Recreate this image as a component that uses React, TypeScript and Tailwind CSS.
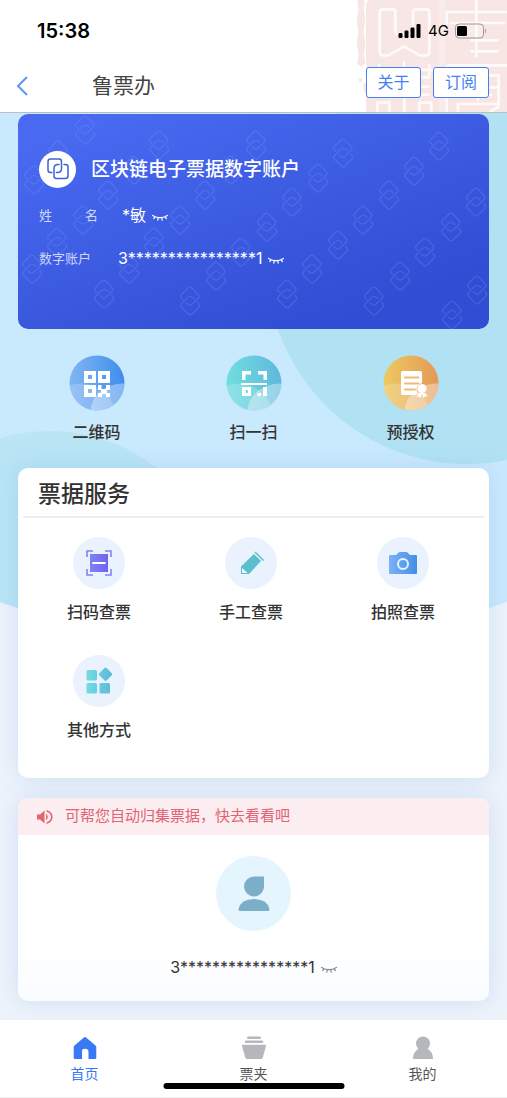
import React from 'react';

const MOTIFS: [number, number][] = [
  [85, 130], [58, 155], [34, 180],
  [159, 145], [134, 170], [108, 195], [83, 220], [57, 242], [32, 269],
  [256, 145], [231, 170], [205, 195], [180, 220], [154, 242], [129, 269], [104, 294],
  [343, 153], [318, 178], [292, 202], [267, 227], [241, 252], [216, 276], [190, 301],
  [439, 146], [414, 171], [389, 195], [363, 220], [338, 245], [312, 269], [287, 294],
  [476, 202], [451, 227], [425, 252], [400, 276], [374, 301],
  [477, 290], [452, 315],
];

const LINK_BACK = 'M5 14.500H3.500Q1 14.500 1 12V3.500Q1 1 3.500 1H12Q14.500 1 14.500 3.500V10.500Q14.500 14.500 10.500 14.500H9.500';
const LINK_FRONT = 'M17 6.500H18.500Q21 6.500 21 9V18Q21 20.500 18.500 20.500H9.500Q7 20.500 7 18V10.500Q7 6.500 11 6.500H12';

function CardPattern() {
  return (
    <svg className="absolute inset-0 h-full w-full" viewBox="18 114 471 215" preserveAspectRatio="xMidYMid slice" aria-hidden="true">
      <defs>
        <g id="link-motif" fill="none" stroke="#8ba0fb" strokeOpacity="0.23" strokeWidth="1.3" strokeLinecap="round" strokeLinejoin="round">
          <g transform="rotate(45) scale(1.06) translate(-11 -10.75)">
            <path d={LINK_BACK} />
            <path d={LINK_FRONT} />
          </g>
        </g>
      </defs>
      {MOTIFS.map(([x, y]) => (
        <use key={`${x}-${y}`} href="#link-motif" x={x} y={y} />
      ))}
    </svg>
  );
}

function Seal() {
  return (
    <svg className="absolute top-0 right-0 h-28 w-[157px]" viewBox="0 0 471 336" aria-hidden="true">
      <path d="M54 0H471V336H48V205Q52 196 48 185V12Z" fill="#f7e6e4" />
      <path d="M22 0H44L42 30L46 60L41 90L46 130L42 165L46 190L34 200L22 192L26 160L20 130L25 95L20 60L25 30Z" fill="#f7e6e4" />
      <path d="M24 236l10 -2 4 8 -8 6zM40 250h8v30l-6 -4z" fill="#f7e6e4" />
      <g fill="none" stroke="#fff" strokeOpacity="0.8" strokeWidth="8" strokeLinejoin="round" strokeLinecap="round">
        <path d="M136 92V36Q136 28 128 28H98Q89 28 89 36V156Q89 166 98 166H116L163 139L208 166H229Q238 166 238 156V36Q238 28 229 28H198Q189 28 189 36V92Q189 102 180 102H145Q136 102 136 92" />
        <path d="M60 210H262M88 196V232H238V196M163 186V336M92 260H236M92 284H236M82 336V308H118V336M208 336V308H244V336" />
        <path d="M379 0V170M290 70V36H468M302 69H462M364 121H442M364 154H442" />
        <path d="M290 336V208Q290 196 302 196H471M324 226H446V312H324V336M324 262H446M384 226V300M350 284H424M420 336L446 320" />
      </g>
      <path d="M266 0H286V336H266Z" fill="#fff" fillOpacity="0.2" />
    </svg>
  );
}

function ClosedEye({ className }: { className: string }) {
  return (
    <svg className={`h-2 w-4 ${className}`} viewBox="0 0 16 8" fill="none" stroke="currentColor" strokeWidth="1.2" strokeLinecap="round" aria-hidden="true">
      <path d="M0.6 1.4Q8 6 15.4 1.4M2.8 2.8L1.8 4.6M6.2 3.8L5.8 6.2M9.8 3.8L10.2 6.2M13.2 2.8L14.4 4.6" />
    </svg>
  );
}

function Disc({ id, from, to, children }: { id: string; from: string; to: string; children: React.ReactNode }) {
  return (
    <svg className="size-14" viewBox="0 0 56 56" aria-hidden="true">
      <defs>
        <linearGradient id={`${id}-fill`} x1="0" x2="1" y1="0" y2="0">
          <stop offset="0" stopColor={from} />
          <stop offset="1" stopColor={to} />
        </linearGradient>
        <clipPath id={`${id}-clip`}><circle cx="28" cy="28" r="27.5" /></clipPath>
      </defs>
      <g clipPath={`url(#${id}-clip)`}>
        <rect width="56" height="56" fill={`url(#${id}-fill)`} />
        <path d="M0 31Q10 27 20 29.500Q28 31 34 36Q42 41 46 56H0Z" fill="#fff" fillOpacity="0.2" />
        <path d="M56 28.500Q44 27.500 33 35Q22 43 21.500 56H56Z" fill="#fff" fillOpacity="0.36" />
      </g>
      {children}
    </svg>
  );
}

const QrDisc = () => (
  <Disc id="qr" from="#82b6f5" to="#3e8deb">
    <path fill="#fff" fillRule="evenodd" d="M15 16H27V28H15ZM19 20V24H23V20ZM29 16H41V28H29ZM33 20V24H37V20ZM15 30H27V42H15ZM19 34V38H23V34ZM29 30H32.500V34H37V30H41V35H38V38H41V42H37V39H33V42H29V38H32V35H29Z" />
  </Disc>
);

const ScanDisc = () => (
  <Disc id="scan" from="#70dfe0" to="#5eb7dc">
    <path fill="#fff" fillRule="evenodd" d="M16 16H25V19.500H19.500V25H16ZM32 16H41V25H37.500V19.500H32ZM15 28H41V30H15ZM16 32H25V41H16ZM19.500 35V38H22V35ZM37 32H41V41H37ZM31.500 38H35V41H31.500Z" />
  </Disc>
);

const AuthDisc = () => (
  <Disc id="auth" from="#edca61" to="#e59857">
    <path fill="#fff" d="M20 16H37Q39 16 39 18V28Q33 30 33.500 36L34.500 38L33 40H20Q18 40 18 38V18Q18 16 20 16Z" />
    <path d="M22 22.500H35.500M22 28.500H35.500M22 34.500H32" stroke="#eebc70" strokeWidth="2" strokeLinecap="round" />
    <circle cx="39" cy="33.500" r="4.500" fill="#fff" />
    <path fill="#fff" d="M35.500 38L33.500 41.500L36 41.500L37.500 43L39 39L40.500 43L42 41.500H44.500L42.500 38Z" />
  </Disc>
);

const ScanTicket = () => (
  <svg className="size-7" viewBox="0 0 28 28" aria-hidden="true">
    <defs><linearGradient id="ticket" x1="0" x2="1"><stop stopColor="#7e83fa" /><stop offset="1" stopColor="#7163ee" /></linearGradient></defs>
    <path d="M2 8V2H8M20 2H26V8M26 20V26H20M8 26H2V20" fill="none" stroke="#8480f5" strokeWidth="1.600" />
    <rect x="5" y="5" width="18" height="18" fill="url(#ticket)" />
    <path d="M8 14H20" stroke="#fff" strokeWidth="1.800" strokeLinecap="round" />
  </svg>
);

const Pencil = () => (
  <svg className="size-7" viewBox="0 0 28 28" aria-hidden="true">
    <path d="M17 5L24 12L12 25H4V17.500Z" fill="#5bbdce" />
    <path d="M5 19L10.500 24H5Z" fill="#fff" />
    <path d="M18 3L26.500 11.500" stroke="#5bbdce" strokeWidth="1.400" />
  </svg>
);

const Camera = () => (
  <svg className="size-7" viewBox="0 0 28 28" aria-hidden="true">
    <defs><linearGradient id="camera" x1="0" x2="1"><stop stopColor="#7ab2f5" /><stop offset="1" stopColor="#438eea" /></linearGradient></defs>
    <path d="M1 6H7L9.500 3.500Q10 3 11 3H17Q18 3 18.500 3.500L21 6H27Q28 6 28 7V24Q28 25 27 25H1Q0 25 0 24V7Q0 6 1 6Z" fill="url(#camera)" />
    <circle cx="14" cy="15" r="5" fill="none" stroke="#eaf2fe" strokeWidth="2" />
  </svg>
);

const Tiles = () => (
  <svg className="size-7" viewBox="1.500 1 28 28" aria-hidden="true">
    <defs><linearGradient id="tiles" gradientUnits="userSpaceOnUse" x1="2" x2="28" y1="0" y2="0"><stop stopColor="#72dee0" /><stop offset="1" stopColor="#5fb8da" /></linearGradient></defs>
    <g fill="url(#tiles)">
      <rect x="3" y="4" width="10.500" height="10.500" rx="1.500" />
      <rect x="3" y="17" width="10.500" height="10.500" rx="1.500" />
      <rect x="16" y="17" width="10.500" height="10.500" rx="1.500" />
      <path d="M21 2Q22 1 23 2L28.500 7.500Q29 8.200 28.500 9L23 14.600Q22 15.500 21 14.600L15.500 9Q15 8.200 15.500 7.500Z" />
    </g>
  </svg>
);

const actions = [
  { label: '二维码', Icon: QrDisc },
  { label: '扫一扫', Icon: ScanDisc },
  { label: '预授权', Icon: AuthDisc },
];

const services = [
  { label: '扫码查票', Icon: ScanTicket },
  { label: '手工查票', Icon: Pencil },
  { label: '拍照查票', Icon: Camera },
  { label: '其他方式', Icon: Tiles },
];

export default function App() {
  return (
    <div className="relative flex min-h-screen flex-col bg-[#edf3fb] font-['Inter','Noto_Sans_CJK_SC',sans-serif] text-[#333]">
      <header className="relative h-[113px] border-b border-[#b9bdc4] bg-white">
        <Seal />
        <div className="relative flex h-[62px] items-center justify-between pr-5 pl-[37px]">
          <time className="text-[20px] font-semibold text-black">15:38</time>
          <div className="flex items-center gap-1.5 text-black">
            <svg className="h-4 w-6" viewBox="0 0 24 16" aria-hidden="true">
              <rect x="0.500" y="10" width="4" height="5" rx="1.200" /><rect x="6.500" y="7.500" width="4" height="7.500" rx="1.200" />
              <rect x="12.500" y="4.500" width="4" height="10.500" rx="1.200" /><rect x="18.500" y="1" width="4" height="14" rx="1.200" />
            </svg>
            <span className="text-[15px]">4G</span>
            <svg className="h-4 w-8" viewBox="0 0 32 16" aria-hidden="true">
              <rect x="0.500" y="1" width="28" height="14" rx="3.500" fill="#fff" fillOpacity="0.3" stroke="#9c9695" />
              <rect x="2" y="3" width="10" height="10" rx="1.500" /><path d="M30 5.500Q32 8 30 10.500Z" fill="#9c9695" />
            </svg>
          </div>
        </div>
        <div className="relative flex h-12 items-center pr-[18px] pl-4">
          <button aria-label="返回" className="flex w-[76px] items-center">
            <svg className="h-5 w-3" viewBox="0 0 12 20" fill="none" stroke="#5c97f8" strokeWidth="2" aria-hidden="true"><path d="M11 1L2 10L11 19" /></svg>
          </button>
          <h1 className="text-[21px] leading-8 text-[#444]">鲁票办</h1>
          <div className="mb-2 ml-auto flex gap-3">
            <button className="h-[31px] w-[55px] rounded-[3px] border border-[#4580f3] bg-white text-base leading-7 text-[#4580f3]">关于</button>
            <button className="h-[31px] w-14 rounded-[3px] border border-[#4580f3] bg-white text-base leading-7 text-[#4580f3]">订阅</button>
          </div>
        </div>
      </header>

      <main className="relative px-[18px] pb-[18px]">
        <svg className="absolute inset-x-0 top-0 h-[496px] w-full" viewBox="0 113 507 496" preserveAspectRatio="none" aria-hidden="true">
          <defs>
            <clipPath id="sky"><path d="M0 113H507V602Q254 690 0 602Z" /></clipPath>
          </defs>
          <g clipPath="url(#sky)">
            <rect y="113" width="507" height="496" fill="#c9e9fd" />
            <circle cx="467" cy="264" r="200" fill="#b1e2f3" />
            <circle cx="50" cy="604" r="173" fill="#b9e5f5" />
          </g>
        </svg>

        <section className="relative mt-px h-[215px] overflow-hidden rounded-[10px] bg-linear-160 from-[#4869f0] from-10% to-[#304dd3] to-85% px-[21px] text-white">
          <CardPattern />
          <div className="relative flex h-[110px] items-center gap-[15px]">
            <span className="flex size-[37px] items-center justify-center rounded-full bg-white">
              <svg className="size-[22px]" viewBox="0 0 22 22" fill="none" stroke="#3e61d8" strokeWidth="1.500" strokeLinecap="round" aria-hidden="true">
                <path d={LINK_BACK} />
                <path d={LINK_FRONT} />
              </svg>
            </span>
            <h2 className="pt-0.5 text-[19px] leading-7 font-medium">区块链电子票据数字账户</h2>
          </div>
          <dl className="relative -mt-5">
            <div className="flex h-[22px] items-center">
              <dt className="flex w-[59px] justify-between pt-0.5 text-[13px] text-[#cdd6fb]"><span>姓</span><span>名</span></dt>
              <dd className="ml-6 flex items-center gap-1.5 text-base">*敏<ClosedEye className="mt-1.5" /></dd>
            </div>
            <div className="mt-[21px] flex h-[22px] items-center">
              <dt className="w-[79px] pt-0.5 text-[13px] text-[#cdd6fb]">数字账户</dt>
              <dd className="flex items-center gap-1.5 text-base">3****************1<ClosedEye className="mt-1.5" /></dd>
            </div>
          </dl>
        </section>

        <section className="relative mt-[26px] grid grid-cols-3">
          {actions.map(({ label, Icon }) => (
            <button key={label} className="flex flex-col items-center gap-[9px] text-base font-medium">
              <Icon />
              {label}
            </button>
          ))}
        </section>

        <section className="relative mt-6 h-[310px] rounded-[10px] bg-white px-[5px] shadow-[0_0_22px_rgba(120,165,225,0.25)]">
          <h2 className="h-[50px] border-b-2 border-[#ececf5] px-[15px] text-[23px] leading-[52px] font-medium">票据服务</h2>
          <div className="mr-[5px] grid grid-cols-3 gap-y-[31px] pt-[19px]">
            {services.map(({ label, Icon }) => (
              <button key={label} className="flex flex-col items-center gap-[11px] text-base font-medium">
                <span className="flex size-[52px] items-center justify-center rounded-full bg-[#eaf2fe]"><Icon /></span>
                {label}
              </button>
            ))}
          </div>
        </section>

        <section className="relative mt-5 h-[203px] overflow-hidden rounded-[10px] bg-linear-to-b from-white from-70% to-[#f9fcff] shadow-[0_0_22px_rgba(120,165,225,0.25)]">
          <p className="flex h-[37px] items-center gap-3 bg-[#fbedf0] px-[19px] text-[15px] text-[#e26374]">
            <svg className="size-4" viewBox="0 0 16 16" fill="#e06670" aria-hidden="true">
              <path d="M0 5.500H3L7.500 1.500V14.500L3 10.500H0Z" /><path d="M9 4.500Q12.500 8 9 11.500Z" />
              <path d="M9.500 1.800Q14.800 3.500 14.800 8T9.500 14.200" fill="none" stroke="#e06670" strokeWidth="1.600" />
            </svg>
            可帮您自动归集票据，快去看看吧
          </p>
          <div className="flex flex-col items-center pt-[21px]">
            <span className="flex size-[75px] items-center justify-center rounded-full bg-[#e5f5fd]">
              <svg className="h-[35px] w-8" viewBox="0 0 32 35" fill="#7baec7" aria-hidden="true">
                <path d="M16 0.500H26V10.500A10 10 0 1 1 16 0.500Z" /><path d="M1.500 35Q0.500 35 0.500 33Q3 23 16 23T31.500 33Q31.500 35 30.500 35Z" />
              </svg>
            </span>
            <div className="mt-6 flex items-center gap-1.5 text-base">3****************1<ClosedEye className="mt-1.5 text-[#888]" /></div>
          </div>
        </section>
      </main>

      <nav className="relative mt-auto grid h-[79px] grid-cols-3 border-y border-[#f0f1f4] bg-white text-sm text-[#555]">
        <a href="#home" className="flex flex-col items-center gap-1 pt-4 text-[#3a79f6]">
          <svg className="h-6 w-6" viewBox="0 0 24 24" fill="currentColor" aria-hidden="true"><path d="M11.200 1.300Q12 0.500 12.800 1.300L22.500 9.500Q23.300 10.200 23.300 11.500V21.500Q23.300 23 22 23H15.500V16Q15.500 12.800 12 12.800T9 16V23H2Q0.700 23 0.700 21.500V11.500Q0.700 10.200 1.500 9.500Z" /></svg>
          首页
        </a>
        <a href="#folder" className="flex flex-col items-center gap-1 pt-4">
          <svg className="h-6 w-6" viewBox="0 0 24 24" fill="#b6b7bc" aria-hidden="true"><rect x="5" y="0.500" width="14" height="2.400" rx="1.200" /><rect x="2.700" y="4.500" width="18.600" height="2.400" rx="1.200" /><path d="M1 8.700H23Q24.300 8.700 24 10L20.800 21.500Q20.400 23 19 23H5Q3.600 23 3.200 21.500L0 10Q-0.300 8.700 1 8.700Z" /></svg>
          票夹
        </a>
        <a href="#me" className="flex flex-col items-center gap-1 pt-4">
          <svg className="h-6 w-6" viewBox="0 0 24 24" fill="#b6b7bc" aria-hidden="true"><circle cx="12" cy="7.500" r="7" /><path d="M8.500 12H15.500Q22 15.500 22 23H2Q2 15.500 8.500 12Z" /></svg>
          我的
        </a>
        <span className="absolute bottom-2 left-1/2 h-1.5 w-[181px] -translate-x-1/2 rounded-full bg-black" />
      </nav>
    </div>
  );
}
